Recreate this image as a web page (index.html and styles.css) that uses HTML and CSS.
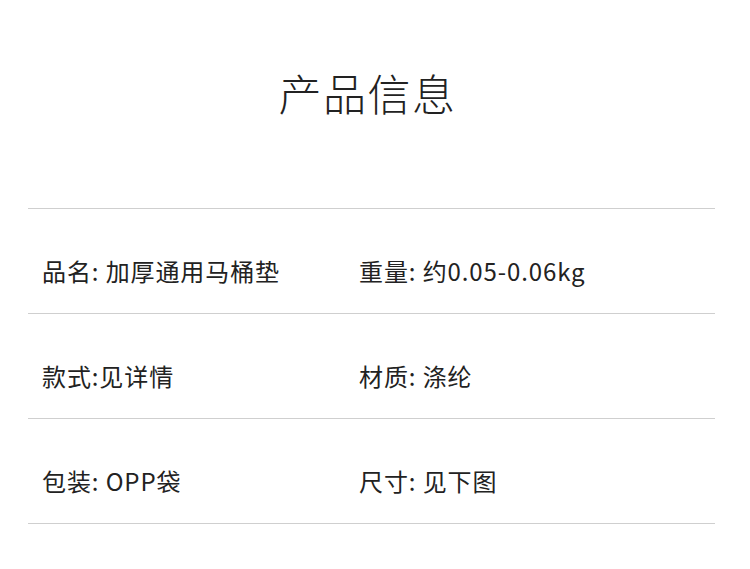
FILE: index.html
```html
<!DOCTYPE html>
<html lang="zh-CN">
<head>
<meta charset="utf-8">
<link rel="stylesheet" href="styles.css">
</head>
<body>
<div class="page">
  <h1 class="title">产品信息</h1>
  <div class="table">
    <div class="row">
      <div class="cell">品名: 加厚通用马桶垫</div>
      <div class="cell">重量: 约0.05-0.06kg</div>
    </div>
    <div class="row">
      <div class="cell">款式:见详情</div>
      <div class="cell">材质: 涤纶</div>
    </div>
    <div class="row">
      <div class="cell">包装: OPP袋</div>
      <div class="cell">尺寸: 见下图</div>
    </div>
  </div>
</div>
</body>
</html>
```
FILE: styles.css
```css
html, body {
  margin: 0;
  padding: 0;
  background: #fff;
}
.page {
  width: 750px;
  height: 569px;
  font-family: "Noto Sans CJK SC", "Noto Sans", sans-serif;
  color: #222;
}
.title {
  margin: 0;
  padding-top: 68px;
  padding-right: 15px;
  height: 208px;
  box-sizing: border-box;
  font-size: 43px;
  line-height: 48px;
  font-weight: 300;
  text-align: center;
  letter-spacing: 1.5px;
  color: #222;
}
.table {
  margin: 0 35px 0 28px;
}
.row {
  display: grid;
  grid-template-columns: 331px 1fr;
  border-top: 1px solid #cfcfcf;
  height: 105px;
  box-sizing: border-box;
  padding-top: 48px;
}
.row:last-child {
  border-bottom: 1px solid #cfcfcf;
  height: 106px;
}
.cell {
  padding-left: 14px;
  font-size: 24px;
  line-height: 28px;
  font-weight: 400;
  letter-spacing: 0.9px;
}
.cell:nth-child(2) {
  padding-left: 0;
}
```
